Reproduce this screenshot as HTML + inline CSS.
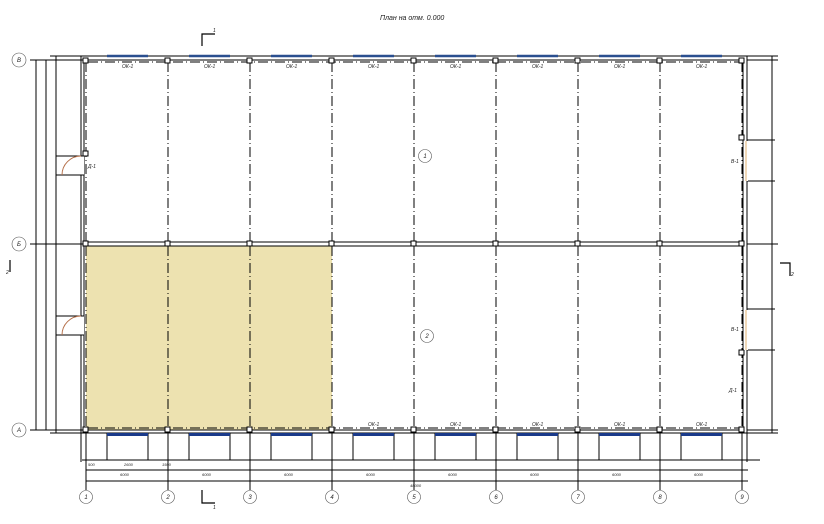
<!DOCTYPE html>
<html><head><meta charset="utf-8"><style>
html,body{margin:0;padding:0;background:#fff;width:824px;height:524px;overflow:hidden}
svg{display:block}
text{font-family:"Liberation Sans",sans-serif;font-style:italic;fill:#222}
</style></head><body>
<svg width="824" height="524" viewBox="0 0 824 524" xmlns="http://www.w3.org/2000/svg">
<text x="380" y="20" font-size="7">План на отм. 0.000</text>
<rect x="86" y="246" width="246" height="184" fill="#ede2b0"/>
<g stroke="#000" fill="none" stroke-width="1">
<path d="M81 56 H747 V433 H81 Z"/>
<path d="M84 60 H743 V430 H84 Z"/>
<path d="M84 242 H743 M84 246 H743"/>
<path d="M36 60 V430 M46 60 V430 M56 56 V433 M30 60 H86 M30 244 H86 M30 430 H86 M50 56 H81 M50 433 H81"/>
<path d="M772 56 V433 M747 56 H778 M747 60 H778 M747 140 H775 M747 181 H775 M747 244 H778 M747 309 H775 M747 350 H775 M747 430 H778 M747 433 H778"/>
<path d="M82 460 H760 M86 470 H748 M86 481 H748 M86 433 V490 M168 433 V490 M250 433 V490 M332 433 V490 M414 433 V490 M496 433 V490 M578 433 V490 M660 433 V490 M742 433 V490 M81 433 V462 M747 433 V462"/>
<path d="M107 433 V460 M148 433 V460 M189 433 V460 M230 433 V460 M271 433 V460 M312 433 V460 M353 433 V460 M394 433 V460 M435 433 V460 M476 433 V460 M517 433 V460 M558 433 V460 M599 433 V460 M640 433 V460 M681 433 V460 M722 433 V460"/>
</g>
<g stroke="#000" stroke-width="1" stroke-dasharray="10,3,1,3" fill="none">
<path d="M86 62 V242 M168 62 V242 M250 62 V242 M332 62 V242 M414 62 V242 M496 62 V242 M578 62 V242 M660 62 V242 M742 62 V242"/>
<path d="M86 246 V429 M168 246 V429 M250 246 V429 M332 246 V429 M414 246 V429 M496 246 V429 M578 246 V429 M660 246 V429 M742 246 V429"/>
<path d="M88 62 H740 M88 428 H740"/>
</g>
<g fill="#fff" stroke="#000" stroke-width="1">
<rect x="83" y="58" width="5" height="5"/><rect x="165" y="58" width="5" height="5"/><rect x="247" y="58" width="5" height="5"/><rect x="329" y="58" width="5" height="5"/><rect x="411" y="58" width="5" height="5"/><rect x="493" y="58" width="5" height="5"/><rect x="575" y="58" width="5" height="5"/><rect x="657" y="58" width="5" height="5"/><rect x="739" y="58" width="5" height="5"/>
<rect x="83" y="241" width="5" height="5"/><rect x="165" y="241" width="5" height="5"/><rect x="247" y="241" width="5" height="5"/><rect x="329" y="241" width="5" height="5"/><rect x="411" y="241" width="5" height="5"/><rect x="493" y="241" width="5" height="5"/><rect x="575" y="241" width="5" height="5"/><rect x="657" y="241" width="5" height="5"/><rect x="739" y="241" width="5" height="5"/>
<rect x="83" y="427" width="5" height="5"/><rect x="165" y="427" width="5" height="5"/><rect x="247" y="427" width="5" height="5"/><rect x="329" y="427" width="5" height="5"/><rect x="411" y="427" width="5" height="5"/><rect x="493" y="427" width="5" height="5"/><rect x="575" y="427" width="5" height="5"/><rect x="657" y="427" width="5" height="5"/><rect x="739" y="427" width="5" height="5"/>
<rect x="83" y="151" width="5" height="5"/><rect x="739" y="135" width="5" height="5"/><rect x="739" y="350" width="5" height="5"/>
</g>
<rect x="57" y="156" width="27" height="19" fill="#fff"/>
<rect x="57" y="316" width="27" height="19" fill="#fff"/>
<g stroke="#000" fill="none"><path d="M56 156 H84 M56 175 H84 M56 316 H84 M56 335 H84"/></g>
<g stroke="#b5704a" fill="none"><path d="M81 156 A19 19 0 0 0 62 175"/><path d="M81 316 A19 19 0 0 0 62 335"/></g>
<rect x="744" y="141" width="4" height="40" fill="#fff"/>
<rect x="744" y="310" width="4" height="40" fill="#fff"/>
<g stroke="#e0b070" stroke-width="1"><path d="M746 141 V181 M746 310 V350"/></g>
<g stroke="#2a4f8f" stroke-width="2.5">
<path d="M107 56 H148 M189 56 H230 M271 56 H312 M353 56 H394 M435 56 H476 M517 56 H558 M599 56 H640 M681 56 H722"/>
</g>
<g stroke="#1a3a8a" stroke-width="3">
<path d="M107 434.5 H148 M189 434.5 H230 M271 434.5 H312 M353 434.5 H394 M435 434.5 H476 M517 434.5 H558 M599 434.5 H640 M681 434.5 H722"/>
</g>
<g font-size="5">
<text x="122" y="68">ОК-1</text><text x="204" y="68">ОК-1</text><text x="286" y="68">ОК-1</text><text x="368" y="68">ОК-1</text><text x="450" y="68">ОК-1</text><text x="532" y="68">ОК-1</text><text x="614" y="68">ОК-1</text><text x="696" y="68">ОК-1</text>
<text x="368" y="426">ОК-1</text><text x="450" y="426">ОК-1</text><text x="532" y="426">ОК-1</text><text x="614" y="426">ОК-1</text><text x="696" y="426">ОК-1</text>
<text x="88" y="168">Д-1</text><text x="731" y="163">В-1</text><text x="731" y="331">В-1</text><text x="729" y="392">Д-1</text>
<text x="88" y="466" font-size="4">500</text><text x="124" y="466" font-size="4">2600</text><text x="162" y="466" font-size="4">1500</text>
<text x="120" y="476" font-size="4">6000</text><text x="202" y="476" font-size="4">6000</text><text x="284" y="476" font-size="4">6000</text><text x="366" y="476" font-size="4">6000</text><text x="448" y="476" font-size="4">6000</text><text x="530" y="476" font-size="4">6000</text><text x="612" y="476" font-size="4">6000</text><text x="694" y="476" font-size="4">6000</text>
<text x="410" y="487" font-size="4">48000</text>
</g>
<g fill="#fff" stroke="#555" stroke-width="0.6">
<circle cx="19" cy="60" r="7"/><circle cx="19" cy="244" r="7"/><circle cx="19" cy="430" r="7"/>
<circle cx="86" cy="497" r="6.5"/><circle cx="168" cy="497" r="6.5"/><circle cx="250" cy="497" r="6.5"/><circle cx="332" cy="497" r="6.5"/><circle cx="414" cy="497" r="6.5"/><circle cx="496" cy="497" r="6.5"/><circle cx="578" cy="497" r="6.5"/><circle cx="660" cy="497" r="6.5"/><circle cx="742" cy="497" r="6.5"/>
<circle cx="425" cy="156" r="6.5"/><circle cx="427" cy="336" r="6.5"/>
</g>
<g font-size="6" text-anchor="middle">
<text x="19" y="62">В</text><text x="19" y="246">Б</text><text x="19" y="432">А</text>
<text x="86" y="499">1</text><text x="168" y="499">2</text><text x="250" y="499">3</text><text x="332" y="499">4</text><text x="414" y="499">5</text><text x="496" y="499">6</text><text x="578" y="499">7</text><text x="660" y="499">8</text><text x="742" y="499">9</text>
<text x="425" y="158">1</text><text x="427" y="338">2</text>
</g>
<g stroke="#000" stroke-width="1.2" fill="none">
<path d="M202 46 V34 H215"/><path d="M202 490 V503 H215"/>
<path d="M10 260 V272"/><path d="M780 263 H790 V276"/>
</g>
<g font-size="5"><text x="213" y="32">1</text><text x="213" y="509">1</text><text x="6" y="274">2</text><text x="791" y="276">2</text></g>
</svg>
</body></html>
